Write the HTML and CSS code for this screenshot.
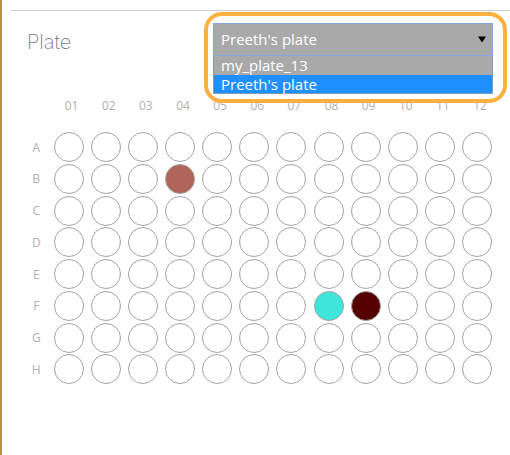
FILE: index.html
```html
<!DOCTYPE html>
<html>
<head>
<meta charset="utf-8">
<link rel="stylesheet" href="styles.css">
</head>
<body>
<div class="page">
  <div class="rule"></div>
  <div class="head">
    <div class="title">Plate</div>
    <div class="picker">
      <div class="select">
        <span class="select-text">Preeth's plate</span>
        <svg class="arrow" width="8" height="7" viewBox="0 0 8 7"><path d="M0 0.5 H8 L4 6.5 Z" fill="#000"/></svg>
      </div>
      <div class="options">
        <div class="option">my_plate_13</div>
        <div class="option selected">Preeth's plate</div>
      </div>
      <div class="callout"></div>
    </div>
  </div>
  <div class="plate">
    <div class="grid cols">
      <span></span>
      <span>01</span><span>02</span><span>03</span><span>04</span><span>05</span><span>06</span>
      <span>07</span><span>08</span><span>09</span><span>10</span><span>11</span><span>12</span>
    </div>
    <div class="grid wells">
      <span class="row-label">A</span>
      <i class="well"></i><i class="well"></i><i class="well"></i><i class="well"></i><i class="well"></i><i class="well"></i><i class="well"></i><i class="well"></i><i class="well"></i><i class="well"></i><i class="well"></i><i class="well"></i>
      <span class="row-label">B</span>
      <i class="well"></i><i class="well"></i><i class="well"></i><i class="well brick"></i><i class="well"></i><i class="well"></i><i class="well"></i><i class="well"></i><i class="well"></i><i class="well"></i><i class="well"></i><i class="well"></i>
      <span class="row-label">C</span>
      <i class="well"></i><i class="well"></i><i class="well"></i><i class="well"></i><i class="well"></i><i class="well"></i><i class="well"></i><i class="well"></i><i class="well"></i><i class="well"></i><i class="well"></i><i class="well"></i>
      <span class="row-label">D</span>
      <i class="well"></i><i class="well"></i><i class="well"></i><i class="well"></i><i class="well"></i><i class="well"></i><i class="well"></i><i class="well"></i><i class="well"></i><i class="well"></i><i class="well"></i><i class="well"></i>
      <span class="row-label">E</span>
      <i class="well"></i><i class="well"></i><i class="well"></i><i class="well"></i><i class="well"></i><i class="well"></i><i class="well"></i><i class="well"></i><i class="well"></i><i class="well"></i><i class="well"></i><i class="well"></i>
      <span class="row-label">F</span>
      <i class="well"></i><i class="well"></i><i class="well"></i><i class="well"></i><i class="well"></i><i class="well"></i><i class="well"></i><i class="well turquoise"></i><i class="well maroon"></i><i class="well"></i><i class="well"></i><i class="well"></i>
      <span class="row-label">G</span>
      <i class="well"></i><i class="well"></i><i class="well"></i><i class="well"></i><i class="well"></i><i class="well"></i><i class="well"></i><i class="well"></i><i class="well"></i><i class="well"></i><i class="well"></i><i class="well"></i>
      <span class="row-label">H</span>
      <i class="well"></i><i class="well"></i><i class="well"></i><i class="well"></i><i class="well"></i><i class="well"></i><i class="well"></i><i class="well"></i><i class="well"></i><i class="well"></i><i class="well"></i><i class="well"></i>
    </div>
  </div>
</div>
</body>
</html>
```

FILE: styles.css
```css
html, body {
  margin: 0;
  padding: 0;
  background: #fff;
}

.page {
  box-sizing: border-box;
  width: 510px;
  height: 455px;
  border-left: 2px solid #b39545;
  padding-top: 10px;
  overflow: hidden;
}

.rule {
  margin-left: 9px;
  border-top: 1px solid #cccccc;
}

.head {
  display: flex;
  align-items: flex-start;
  margin-top: 12px;
  padding-left: 25px;
  height: 33px;
}

.title {
  font-family: Inter, Lato, sans-serif;
  font-weight: 200;
  font-size: 20px;
  line-height: 21px;
  padding-top: 9px;
  color: #7a7a7a;
}

.picker {
  position: relative;
  margin-left: auto;
  margin-right: 17px;
  width: 280px;
}

.select {
  box-sizing: border-box;
  height: 33px;
  display: flex;
  align-items: center;
  justify-content: space-between;
  padding: 0 6px 1px 7px;
  background: #a9a9a9;
  border: 1px solid #86a6dc;
  font-family: "Open Sans", sans-serif;
  font-size: 15px;
  color: #fff;
}

.arrow {
  display: block;
}

.options {
  position: absolute;
  left: 0;
  right: 0;
  top: 33px;
  border: 1px solid #7f9bb8;
  border-top: 0;
  font-family: "Open Sans", sans-serif;
  font-size: 15px;
  color: #fff;
}

.option {
  height: 18.5px;
  line-height: 18px;
  padding-left: 7px;
  background: #a9a9a9;
}

.option.selected {
  background: #1e90ff;
}

.callout {
  position: absolute;
  left: -9px;
  top: -11px;
  width: 303px;
  height: 91px;
  box-sizing: border-box;
  border: 4px solid #fbb040;
  border-radius: 18px;
}

.plate {
  margin-top: 42px;
  padding-left: 24px;
}

.grid {
  display: grid;
  grid-template-columns: 20.5px repeat(12, 30px);
  column-gap: 7.14px;
}

.cols {
  height: 16px;
  align-items: center;
  font-family: "Open Sans", sans-serif;
  font-size: 12px;
  line-height: 16px;
  color: #b0b0b0;
}

.cols span {
  text-align: center;
  padding-left: 6px;
}

.wells {
  margin-top: 18px;
  grid-template-rows: repeat(8, 30px);
  row-gap: 1.75px;
}

.row-label {
  align-self: center;
  text-align: center;
  font-family: "Open Sans", sans-serif;
  font-size: 12px;
  color: #b0b0b0;
}

.well {
  display: block;
  box-sizing: border-box;
  width: 30px;
  height: 30px;
  border: 1px solid #a3a3a3;
  border-radius: 50%;
  background: #fff;
}

.well.brick {
  background: #b0655a;
}

.well.turquoise {
  background: #3ee5d9;
}

.well.maroon {
  background: #540000;
}
```
